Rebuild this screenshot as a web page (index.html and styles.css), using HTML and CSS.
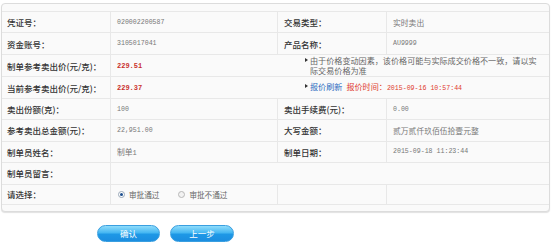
FILE: index.html
```html
<!DOCTYPE html>
<html lang="zh-CN">
<head>
<meta charset="utf-8">
<title>卖出审批</title>
<link rel="stylesheet" href="styles.css">
</head>
<body>
<div class="panel">
  <div class="row">
    <div class="cell label">凭证号：</div>
    <div class="cell value num">020002200587</div>
    <div class="cell label">交易类型：</div>
    <div class="cell value">实时卖出</div>
  </div>
  <div class="row">
    <div class="cell label">资金账号：</div>
    <div class="cell value num">3105017041</div>
    <div class="cell label">产品名称：</div>
    <div class="cell value num">AU9999</div>
  </div>
  <div class="row tall">
    <div class="cell label">制单参考卖出价(元/克)：</div>
    <div class="cell wide">
      <span class="price">229.51</span>
      <div class="note"><i class="tri"></i><span class="note-text">由于价格变动因素，该价格可能与实际成交价格不一致，请以实际交易价格为准</span></div>
    </div>
  </div>
  <div class="row">
    <div class="cell label">当前参考卖出价(元/克)：</div>
    <div class="cell wide">
      <span class="price">229.37</span>
      <div class="note"><i class="tri"></i><span class="link">报价刷新</span><span class="time">报价时间：<span class="mono">2015-09-16 10:57:44</span></span></div>
    </div>
  </div>
  <div class="row">
    <div class="cell label">卖出份额(克)：</div>
    <div class="cell value num">100</div>
    <div class="cell label">卖出手续费(元)：</div>
    <div class="cell value num">0.00</div>
  </div>
  <div class="row">
    <div class="cell label">参考卖出总金额(元)：</div>
    <div class="cell value num">22,951.00</div>
    <div class="cell label">大写金额：</div>
    <div class="cell value">贰万贰仟玖佰伍拾壹元整</div>
  </div>
  <div class="row">
    <div class="cell label">制单员姓名：</div>
    <div class="cell value"><span>制单<span class="mono">1</span></span></div>
    <div class="cell label">制单日期：</div>
    <div class="cell value num">2015-09-18 11:23:44</div>
  </div>
  <div class="row">
    <div class="cell label">制单员留言：</div>
    <div class="cell wide"></div>
  </div>
  <div class="row last">
    <div class="cell label">请选择：</div>
    <div class="cell value radios">
      <label class="opt"><span class="radio on"></span>审批通过</label>
      <label class="opt"><span class="radio"></span>审批不通过</label>
    </div>
    <div class="cell"></div>
    <div class="cell"></div>
  </div>
</div>
<div class="actions">
  <button class="btn btn-ok">确认</button>
  <button class="btn btn-back">上一步</button>
</div>
</body>
</html>
```

FILE: styles.css
```css
* { box-sizing: border-box; }
html, body { margin: 0; padding: 0; background: #fff; }
body {
  font-family: "Noto Sans CJK SC", "Noto Sans", sans-serif;
  color: #333;
  width: 554px;
  height: 243px;
  overflow: hidden;
}
.panel {
  margin: 3px 0 0 1px;
  width: 549px;
  border: 1px solid #dcdcdc;
  border-radius: 4px;
  background: #fafafa;
  padding: 7px 0 6px;
  box-shadow: 0 1px 1px rgba(0,0,0,0.12);
}
.row {
  display: grid;
  grid-template-columns: 108px 167px 109px 163px;
  height: 21.45px;
  border-top: 1px solid #e8e8e8;
}
.row.tall { height: 22.5px; }
.row.last { border-bottom: 1px solid #e8e8e8; }
.cell {
  display: flex;
  align-items: center;
  border-left: 1px solid #e8e8e8;
  padding-left: 6px;
  white-space: nowrap;
  overflow: visible;
}
.cell:first-child { border-left: none; padding-left: 5px; }
.label { font-size: 8.5px; color: #333; font-weight: 500; }
.value { font-size: 7.8px; color: #777; }
.num, .mono { font-family: "Liberation Mono", monospace; font-size: 6.6px; color: #777; }
.value .mono { font-size: 7px; }
.wide { grid-column: 2 / 5; }
.price {
  font-family: "Liberation Mono", monospace;
  font-weight: bold;
  font-size: 7px;
  color: #c9302c;
  width: 188px;
  flex: none;
}
.note {
  display: flex;
  align-items: flex-start;
  font-size: 8.1px;
  color: #666;
  line-height: 10px;
}
.tri {
  flex: none;
  width: 0; height: 0;
  border-left: 3px solid #333;
  border-top: 2.5px solid transparent;
  border-bottom: 2.5px solid transparent;
  margin: 2.5px 2px 0 0;
}
.note-text { white-space: normal; width: 232px; }
.link { color: #2a6cc0; margin-right: 4px; }
.time { color: #e03a2e; }
.time .mono { color: #e03a2e; font-size: 6.6px; }
.radios { padding-left: 7px; font-size: 7.6px; color: #666; }
.opt { display: flex; align-items: center; }
.opt + .opt { margin-left: 19px; }
.radio {
  width: 7px; height: 7px;
  border-radius: 50%;
  border: 1px solid #b8b8b8;
  background: #f2f2f2;
  margin-right: 4px;
  position: relative;
}
.radio.on { border-color: #9aa8b8; background: #fff; }
.radio.on::after {
  content: "";
  position: absolute;
  left: 1px; top: 1px;
  width: 3px; height: 3px;
  border-radius: 50%;
  background: #1d4f8f;
}
.actions {
  display: flex;
  gap: 10px;
  margin: 13px 0 0 97px;
}
.btn {
  height: 17px;
  border: 1px solid #3a9fe0;
  border-radius: 9px;
  background: linear-gradient(#8fdcfb 0%, #46b7f2 45%, #1e98e6 55%, #1b8ee0 100%);
  color: #fff;
  font-family: "Noto Sans CJK SC", sans-serif;
  font-size: 8.5px;
  padding: 0;
  line-height: 15px;
}
.btn-ok { width: 63px; }
.btn-back { width: 64px; }
```
